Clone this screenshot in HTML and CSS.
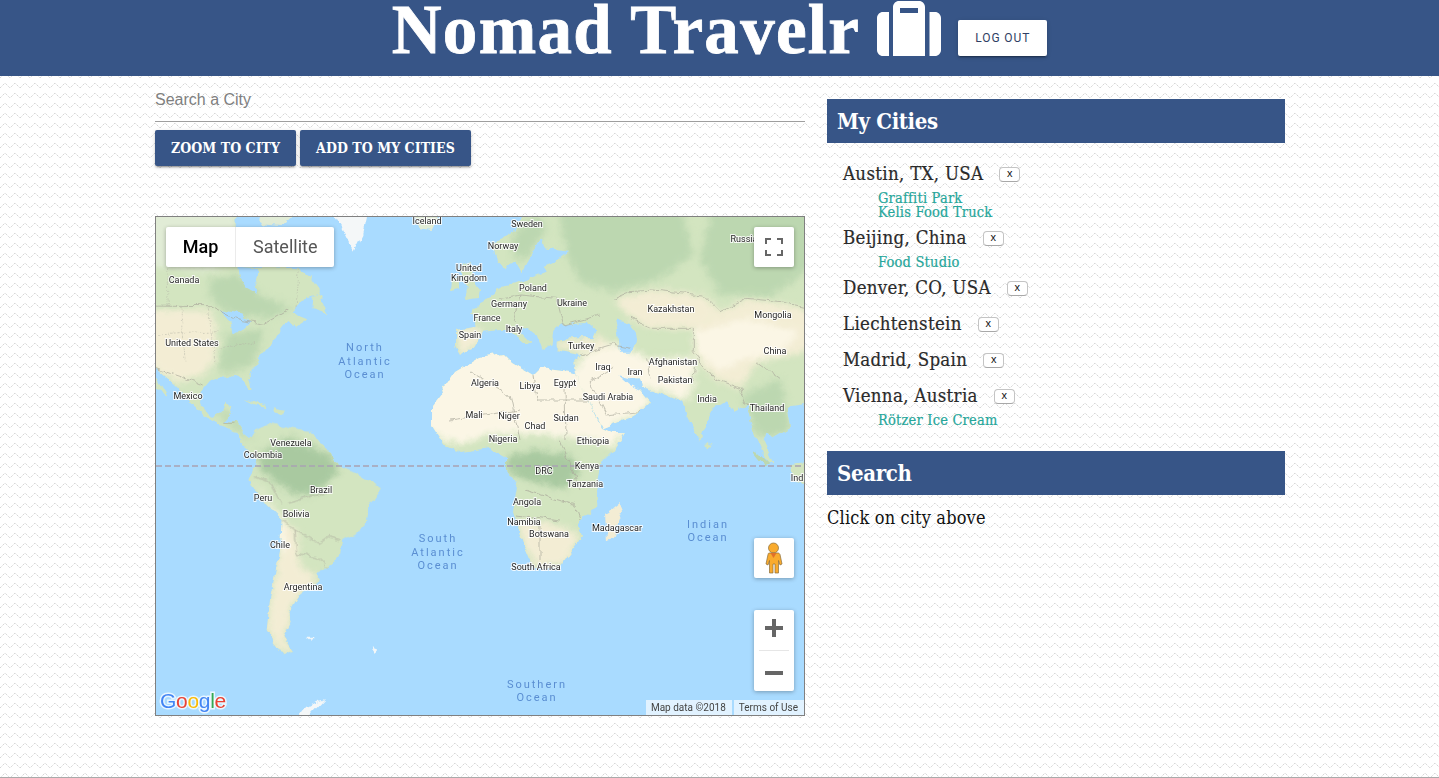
FILE: index.html
```html
<!DOCTYPE html>
<html lang="en">
<head>
<meta charset="utf-8">
<title>Nomad Travelr</title>
<link rel="stylesheet" href="styles.css">
</head>
<body>
<header class="topbar">
  <h1 class="brand">Nomad Travelr</h1>
  <svg class="suitcase" viewBox="0 0 64 55" aria-hidden="true">
    <path d="M12 11v44H6c-3.300 0-6-2.700-6-6V17c0-3.300 2.700-6 6-6zM52.500 11H58c3.300 0 6 2.700 6 6v32c0 3.300-2.700 6-6 6h-5.500z"/>
    <path fill-rule="evenodd" d="M16 55V6c0-3.300 2.700-6 6-6h20c3.300 0 6 2.700 6 6v49zM23 7v5h18V7z"/>
  </svg>
  <button class="logout">Log out</button>
</header>

<main class="page">
  <section class="left">
    <div class="search-field">Search a City</div>
    <div class="actions">
      <button class="action">Zoom to city</button>
      <button class="action">Add to my cities</button>
    </div>
    <div class="map">
      <svg class="map-art" viewBox="156 217 648 498" aria-label="World map">
        <defs>
          <filter id="rough" filterUnits="userSpaceOnUse" x="130" y="190" width="700" height="550">
            <feTurbulence type="fractalNoise" baseFrequency=".1" numOctaves="3" seed="4" result="n"/>
            <feDisplacementMap in="SourceGraphic" in2="n" scale="7" xChannelSelector="R" yChannelSelector="G"/>
          </filter>
          <filter id="soft" filterUnits="userSpaceOnUse" x="130" y="190" width="700" height="550">
            <feGaussianBlur stdDeviation="3.500"/>
          </filter>
          <path id="na" transform="translate(155 215) scale(.33333)" d="M-40 -40L240 -40L245 155L310 155L430 160L470 190L495 225L490 240L440 255L410 290L460 310L420 335L395 320L370 350L350 385L320 420L300 450L280 480L290 525L280 525L265 490L240 480L195 485L165 500L140 530L135 565L165 605L200 590L210 565L232 570L225 600L205 625L245 620L270 655L310 685L270 690L235 645L195 630L150 605L110 565L60 510L10 465L-40 440Z"/>
          <path id="sa" transform="translate(155 440) scale(.33333)" d="M300 -30L350 -50L470 -25L550 75L610 100L678 145L640 200L635 260L565 300L555 340L520 385L480 395L495 420L430 470L400 520L410 545L385 590L415 635L385 645L335 570L345 480L375 330L380 240L330 190L280 120L305 60L270 20Z"/>
          <path id="af" d="M480 357L503 353L513 363L533 375L540 368L577 373L580 385L602 428L613 433L625 433L613 452L600 465L597 483L595 507L577 523L582 537L570 553L560 568L533 567L523 543L513 512L518 487L507 470L507 457L490 448L462 452L445 445L432 425L432 405L442 392L455 372Z"/>
          <path id="eu" transform="translate(480 215) scale(.33333)" d="M215 -40L1030 -40L1030 560L920 575L930 640L880 670L860 650L850 680L880 745L860 740L820 650L800 570L760 590L740 560L690 590L660 680L620 600L610 560L560 540L490 520L480 490L440 490L480 525L510 560L470 600L370 640L300 510L285 440L300 420L230 405L230 380L260 370L340 370L350 345L320 320L240 330L220 350L215 390L190 410L170 360L150 345L100 330L155 385L140 390L80 345L60 345L10 350L-20 400L-50 410L-60 420L-75 395L-75 345L-10 335L-15 300L-30 290L15 260L50 220L110 205L200 170L190 150L240 130L265 110L190 100L180 60Z"/>
          <path id="sc" transform="translate(480 215) scale(.33333)" d="M230 -40L160 -40L100 50L35 90L45 130L80 160L110 140L125 175L150 130L175 80L230 40Z"/>
          <clipPath id="landclip">
            <use href="#na"/><use href="#sa"/><use href="#af"/><use href="#eu"/><use href="#sc"/>
          </clipPath>
        </defs>

        <g filter="url(#rough)">
          <g class="land">
            <use href="#na"/><use href="#sa"/><use href="#af"/><use href="#eu"/><use href="#sc"/>
          </g>

          <g clip-path="url(#landclip)">
            <g filter="url(#soft)">
              <!-- North America regions -->
              <g transform="translate(155 215) scale(.33333)">
                <path class="pale" d="M-40 -40L240 -40L245 130L165 170L-40 150Z"/>
                <path class="beige" d="M-40 285L165 285L185 340L180 440L130 490L60 500L-40 440Z"/>
                <path class="mid" d="M160 190L250 180L320 240L410 280L340 310L230 300L170 255Z"/>
                <path class="mid" d="M215 360L330 340L300 440L240 470L190 470Z"/>
                <path class="mid" d="M145 560L240 610L300 680L240 640Z"/>
              </g>
              <!-- South America regions -->
              <g transform="translate(155 440) scale(.33333)">
                <path class="beige" d="M375 240L425 270L435 380L490 410L430 470L400 520L410 545L385 590L415 635L385 645L335 570L345 480L375 330Z"/>
                <path class="dark" d="M305 50L400 -10L530 50L550 90L500 150L440 170L380 140L325 100Z"/>
                <path class="sand" d="M290 115L330 170L380 240L400 330L370 330L355 230Z"/>
              </g>
              <!-- Africa regions -->
              <path class="sand" d="M480 350L503 348L540 362L585 368L610 425L630 430L613 447L585 440L540 434L490 434L460 445L440 438L425 425L428 400L450 365Z"/>
              <path class="dark" d="M507 457L535 450L570 455L580 472L565 488L530 482L507 470Z"/>
              <path class="beige" d="M518 520L560 525L580 537L565 565L535 565L523 543Z"/>
              <!-- Eurasia regions -->
              <g transform="translate(480 215) scale(.33333)">
                <path class="mid" d="M230 -40L600 -40L640 120L540 190L400 230L300 200L260 120Z"/>
                <path class="mid" d="M700 -40L1030 -40L1030 130L880 240L720 240L660 130Z"/>
                <path class="mid" d="M100 50L175 0L200 40L140 130L100 130Z"/>
                <path class="beige" d="M400 250L520 225L670 240L720 290L640 340L520 340L450 310Z"/>
                <path class="beige" d="M720 290L800 250L1030 290L1030 400L830 440L780 520L700 490L640 410L640 340Z"/>
                <path class="sand" d="M640 350L800 310L960 350L900 420L800 430L720 470L650 410Z"/>
                <path class="sand" d="M300 420L400 390L450 400L500 430L650 430L640 500L620 560L560 530L490 520L510 560L470 600L370 640L300 510Z"/>
                <path class="beige" d="M230 380L370 365L390 395L300 410L230 400Z"/>
                <path class="beige" d="M-75 345L-10 335L10 350L-20 400L-60 420Z"/>
                <path class="mid" d="M790 540L900 490L930 640L880 670L820 650Z"/>
              </g>
            </g>
          </g>

          <!-- Inland water and islands -->
          <g transform="translate(155 215) scale(.33333)">
            <path class="water" d="M250 155L310 160L300 190L305 235L270 215L255 190Z"/>
            <path class="water" d="M195 285L255 295L290 320L270 340L232 360L228 325Z"/>
            <path class="land" d="M475 245L495 240L520 295L490 285L472 280Z"/>
            <path class="land" d="M265 552L335 572L335 580L300 570ZM350 580L390 588L380 597L355 592ZM3 490L35 545L25 540L0 505Z"/>
            <path class="pale" d="M300 -10L430 -10L380 30L320 25Z"/>
            <path class="ice" d="M530 -10L640 -10L625 60L600 110L585 90L560 40Z"/>
            <path class="pale" d="M775 -10L860 -10L830 45L795 40Z"/>
          </g>
          <g transform="translate(155 440) scale(.33333)">
            <path class="ice" d="M455 590L478 590L470 602ZM650 625L668 632L660 640Z"/>
          </g>
          <path class="ice" d="M296 720L305 708L318 701L324 699L312 712L305 720Z"/>
          <g transform="translate(480 215) scale(.33333)">
            <path class="water" d="M240 330L320 322L350 345L340 368L260 365L230 350Z"/>
            <path class="water" d="M405 310L455 325L470 370L455 410L420 410L415 360Z"/>
            <path class="water" d="M415 480L450 490L480 525L450 510Z"/>
            <path class="land" d="M680 680L695 690L690 700L680 695Z"/>
            <path class="mid" d="M830 710L865 745L850 752L820 715Z"/>
            <path class="line" d="M400 250L450 230L520 225L670 240L720 290L800 250L900 260L1030 290M450 310L520 340L640 340M640 340L640 410L700 490L780 520M500 430L510 490M650 430L640 500M300 420L400 390L450 400M400 460L330 500L380 600L480 590M60 250L120 240L230 250M120 240L100 320M230 250L250 330L360 300M830 440L900 490M780 520L800 570"/>
          </g>
          <path class="land" d="M462 265L470 262L472 278L480 290L478 298L464 300L468 288L462 278Z"/>
          <path class="land" d="M452 278L460 276L460 288L451 292Z"/>
          <path class="land" d="M790 465L815 462L815 490L795 480Z"/>
          <path class="beige" d="M605 515L620 503L623 510L613 538L607 540Z"/>

          <g transform="translate(155 215) scale(.33333)">
            <path class="line" d="M-40 270L165 272L240 310L330 325L400 285M0 460L90 490L140 510M205 625L235 625"/>
            <path class="dash" d="M80 275L90 440M160 280L180 440M0 360L190 350M190 400L300 380M430 160L420 280M35 160L40 270"/>
          </g>
          <g transform="translate(155 440) scale(.33333)">
            <path class="line" d="M420 270L490 310L520 290L560 300M380 240L420 270L425 340L485 350L520 385M300 110L350 130L380 190M400 190L530 150"/>
          </g>
          <path class="line-thin" d="M470 372L510 395L520 440M533 375L536 400L590 400M565 385L566 440M450 420L520 410M560 440L580 490M525 490L575 505L580 520M515 515L560 520M540 520L540 560"/>
        </g>

        <path class="equator" d="M156 466H804"/>

        <g class="places">
          <text x="427" y="224">Iceland</text><text x="527" y="227">Sweden</text><text x="503" y="249">Norway</text>
          <text x="469" y="271">United</text><text x="469" y="281">Kingdom</text><text x="533" y="291">Poland</text>
          <text x="509" y="307">Germany</text><text x="487" y="321">France</text><text x="470" y="338">Spain</text>
          <text x="514" y="332">Italy</text><text x="572" y="306">Ukraine</text><text x="671" y="312">Kazakhstan</text>
          <text x="773" y="318">Mongolia</text><text x="581" y="349">Turkey</text><text x="775" y="354">China</text>
          <text x="603" y="370">Iraq</text><text x="635" y="375">Iran</text><text x="673" y="365">Afghanistan</text>
          <text x="675" y="383">Pakistan</text><text x="485" y="386">Algeria</text><text x="530" y="389">Libya</text>
          <text x="565" y="386">Egypt</text><text x="608" y="400">Saudi Arabia</text><text x="707" y="402">India</text>
          <text x="767" y="411">Thailand</text><text x="474" y="418">Mali</text><text x="509" y="419">Niger</text>
          <text x="535" y="429">Chad</text><text x="566" y="421">Sudan</text><text x="503" y="442">Nigeria</text>
          <text x="593" y="444">Ethiopia</text><text x="184" y="283">Canada</text><text x="192" y="346">United States</text>
          <text x="188" y="399">Mexico</text><text x="291" y="446">Venezuela</text><text x="263" y="458">Colombia</text>
          <text x="263" y="501">Peru</text><text x="321" y="493">Brazil</text><text x="296" y="517">Bolivia</text>
          <text x="280" y="548">Chile</text><text x="303" y="590">Argentina</text><text x="544" y="474">DRC</text>
          <text x="587" y="469">Kenya</text><text x="585" y="487">Tanzania</text><text x="527" y="505">Angola</text>
          <text x="524" y="525">Namibia</text><text x="549" y="537">Botswana</text><text x="617" y="531">Madagascar</text>
          <text x="536" y="570">South Africa</text><text x="744" y="242">Russia</text><text x="797" y="481">Ind</text>
        </g>
        <g class="oceans">
          <text x="365" y="351">North</text><text x="365" y="365">Atlantic</text><text x="365" y="378">Ocean</text>
          <text x="438" y="542">South</text><text x="438" y="556">Atlantic</text><text x="438" y="569">Ocean</text>
          <text x="708" y="528">Indian</text><text x="708" y="541">Ocean</text>
          <text x="537" y="688">Southern</text><text x="537" y="701">Ocean</text>
        </g>
        <text class="google" x="160" y="708"><tspan class="g-blue">G</tspan><tspan class="g-red">o</tspan><tspan class="g-yellow">o</tspan><tspan class="g-blue">g</tspan><tspan class="g-green">l</tspan><tspan class="g-red">e</tspan></text>
      </svg>

      <div class="map-type">
        <span class="type-btn type-active">Map</span>
        <span class="type-btn">Satellite</span>
      </div>
      <div class="ctl fullscreen">
        <svg viewBox="0 0 18 18" width="18" height="18"><path class="ctl-icon" d="M0 6V0h6v2H2v4zM12 0h6v6h-2V2h-4zM0 12h2v4h4v2H0zM16 12h2v6h-6v-2h4z"/></svg>
      </div>
      <div class="ctl pegman">
        <svg viewBox="0 0 40 40" width="40" height="40">
          <circle class="peg" cx="19.500" cy="10" r="5"/>
          <path class="peg" d="M15 15h9c1 0 1.500.6 2 1.500L28 26l-2 1-1.500-4.500V35h-3.500v-9h-2v9h-3.500V22.500L14 27l-2-1 2-9.500c.3-.9.500-1.500 1-1.500z"/>
          <path class="peg-v" d="M16.500 15h6L19.500 20z"/>
        </svg>
      </div>
      <div class="ctl zoom">
        <button class="zoom-btn zoom-in"><svg viewBox="0 0 18 18" width="18" height="18"><path class="ctl-icon" d="M7 0h4v7h7v4h-7v7H7v-7H0V7h7z"/></svg></button>
        <i class="zoom-sep"></i>
        <button class="zoom-btn zoom-out"><svg viewBox="0 0 18 18" width="18" height="18"><path class="ctl-icon" d="M0 7h18v4H0z"/></svg></button>
      </div>
      <div class="attribution">
        <span class="attr-item">Map data ©2018</span>
        <span class="attr-item">Terms of Use</span>
      </div>
    </div>
  </section>

  <aside class="right">
    <h2 class="panel-title">My Cities</h2>
    <ul class="cities">
      <li>
        <div class="city"><span>Austin, TX, USA</span><button class="remove">x</button></div>
        <a class="spot">Graffiti Park</a>
        <a class="spot">Kelis Food Truck</a>
      </li>
      <li>
        <div class="city"><span>Beijing, China</span><button class="remove">x</button></div>
        <a class="spot">Food Studio</a>
      </li>
      <li><div class="city"><span>Denver, CO, USA</span><button class="remove">x</button></div></li>
      <li><div class="city"><span>Liechtenstein</span><button class="remove">x</button></div></li>
      <li><div class="city"><span>Madrid, Spain</span><button class="remove">x</button></div></li>
      <li>
        <div class="city"><span>Vienna, Austria</span><button class="remove">x</button></div>
        <a class="spot">Rötzer Ice Cream</a>
      </li>
    </ul>
    <h2 class="panel-title">Search</h2>
    <p class="hint">Click on city above</p>
  </aside>
</main>
<footer class="bottom-rule"></footer>
</body>
</html>
```

FILE: styles.css
```css
* { box-sizing: border-box; }

html, body { margin: 0; height: 100%; overflow: hidden; }

body {
  display: flex;
  flex-direction: column;
  height: 778px;
  background-color: #fff;
  background-image: url("data:image/svg+xml,%3Csvg xmlns='http://www.w3.org/2000/svg' width='20' height='10'%3E%3Cpath d='M0 8L5 3L10 8L15 3L20 8' fill='none' stroke='%23cfcfcf' stroke-width='1' stroke-dasharray='1.200 1'/%3E%3C/svg%3E");
  font-family: "DejaVu Serif Condensed", "DejaVu Serif", serif;
  color: #222;
}

/* Header */
.topbar {
  flex: none;
  height: 76px;
  background: #375587;
  display: flex;
  justify-content: center;
  align-items: flex-start;
}

.brand {
  margin: 0;
  font-family: "Liberation Serif", serif;
  font-weight: 700;
  font-size: 69px;
  line-height: 60px;
  letter-spacing: 1.300px;
  color: #fff;
  -webkit-text-stroke: .8px #fff;
  white-space: nowrap;
}

.suitcase {
  width: 64px;
  height: 55px;
  margin: 1px 0 0 17px;
  fill: #fff;
}

.logout {
  width: 89px;
  height: 36px;
  margin: 20px 0 0 17px;
  border: 0;
  border-radius: 2px;
  background: #fff;
  box-shadow: 0 2px 2px rgba(0,0,0,.14), 0 3px 1px -2px rgba(0,0,0,.2), 0 1px 5px rgba(0,0,0,.12);
  font-family: Roboto, sans-serif;
  font-size: 12px;
  letter-spacing: .9px;
  text-transform: uppercase;
  color: #2f3e64;
}

/* Page columns */
.page {
  flex: 1;
  display: flex;
  gap: 22px;
  margin-left: 155px;
  width: 1130px;
}

.left { width: 650px; display: flex; flex-direction: column; }
.right { width: 458px; padding-top: 23px; }

.search-field {
  height: 46px;
  padding-top: 14px;
  border-bottom: 1px solid #9e9e9e;
  font-family: "Liberation Sans", sans-serif;
  font-size: 16px;
  line-height: 19px;
  color: #7f7f7f;
}

.actions { display: flex; gap: 4px; margin-top: 8px; }

.action {
  height: 36px;
  padding: 0 16px;
  border: 0;
  border-radius: 2px;
  background: #375587;
  box-shadow: 0 2px 2px rgba(0,0,0,.14), 0 3px 1px -2px rgba(0,0,0,.2), 0 1px 5px rgba(0,0,0,.12);
  font-family: inherit;
  font-weight: 700;
  font-size: 14px;
  letter-spacing: .05px;
  text-transform: uppercase;
  color: #fff;
}

/* Map */
.map {
  position: relative;
  width: 650px;
  height: 500px;
  margin-top: 50px;
  border: 1px solid #808080;
  background: #a9dbff;
  overflow: hidden;
  font-family: Roboto, sans-serif;
}

.map-art { display: block; width: 648px; height: 498px; }

.land  { fill: #d3e5c0; }
.pale  { fill: #e1ecd6; }
.mid   { fill: #bcd7b0; }
.dark  { fill: #a9c9a0; }
.beige { fill: #f3edd4; }
.sand  { fill: #fbf6e5; }
.water { fill: #a9dbff; }
.ice   { fill: #f4f7f8; }
.line  { fill: none; stroke: #aaa99b; stroke-width: 2; }
.line-thin { fill: none; stroke: #aaa99b; stroke-width: .7; }
.dash  { fill: none; stroke: #b5b5a5; stroke-width: 1.500; stroke-dasharray: 5 4; }
.equator { fill: none; stroke: #a9a3b3; stroke-width: 1.500; stroke-dasharray: 6 3; }

.places text {
  font-family: Roboto, sans-serif;
  font-size: 9px;
  font-weight: 400;
  text-anchor: middle;
  fill: #1f1f1f;
  stroke: #fff;
  stroke-width: 2px;
  stroke-opacity: .85;
  paint-order: stroke;
}

.oceans text {
  font-family: Roboto, sans-serif;
  font-size: 11px;
  letter-spacing: 2px;
  text-anchor: middle;
  fill: #5a8ed2;
}

.google {
  font-family: "Liberation Sans", sans-serif;
  font-size: 21px;
  letter-spacing: -.3px;
  stroke: #fff;
  stroke-width: 3px;
  stroke-opacity: .75;
  paint-order: stroke;
}
.g-blue { fill: #4285f4; }
.g-red { fill: #ea4335; }
.g-yellow { fill: #fbbc05; }
.g-green { fill: #34a853; }

.map-type {
  position: absolute;
  top: 10px;
  left: 10px;
  display: flex;
  height: 40px;
  border-radius: 2px;
  background: #fff;
  box-shadow: 0 1px 4px rgba(0,0,0,.3);
  font-size: 18px;
  line-height: 40px;
}

.type-btn { padding: 0 17px; color: #565656; }
.type-active {
  width: 70px;
  padding: 0;
  text-align: center;
  font-weight: 500;
  color: #000;
  border-right: 1px solid #ebebeb;
}

.ctl {
  position: absolute;
  right: 10px;
  width: 40px;
  border-radius: 2px;
  background: #fff;
  box-shadow: 0 1px 4px rgba(0,0,0,.3);
}

.fullscreen { top: 10px; height: 40px; display: flex; align-items: center; justify-content: center; }
.pegman { top: 321px; height: 40px; }
.zoom { top: 393px; height: 81px; }

.ctl-icon { fill: #666; }
.peg { fill: #f9ab2e; stroke: #8a6d3b; stroke-width: .7; }
.peg-v { fill: #e0702a; }

.zoom-btn {
  display: flex;
  align-items: center;
  justify-content: center;
  width: 40px;
  height: 40px;
  padding: 0;
  border: 0;
  background: none;
}
.zoom-in { padding-bottom: 4px; }
.zoom-out { padding-top: 4px; }

.zoom-sep { display: block; height: 1px; margin: 0 5px; background: #e6e6e6; }

.attribution {
  position: absolute;
  right: 0;
  bottom: 0;
  display: flex;
  gap: 2px;
  font-size: 10px;
  line-height: 15px;
  color: #444;
}

.attr-item { padding: 0 6px 0 5px; background: rgba(255,255,255,.65); }

/* Right column */
.panel-title {
  margin: 0;
  height: 44px;
  padding-left: 10px;
  background: #375587;
  font-weight: 700;
  font-size: 22px;
  letter-spacing: -.35px;
  line-height: 44px;
  color: #fff;
}

.cities {
  margin: 0 0 24px;
  padding: 12px 0 0 16px;
  list-style: none;
}

.city {
  display: flex;
  align-items: center;
  height: 36px;
  font-size: 18.500px;
  letter-spacing: .32px;
  color: #2a2a2a;
  -webkit-text-stroke: .2px #2a2a2a;
}

.remove {
  width: 21px;
  height: 15px;
  margin: 2px 0 0 16px;
  padding: 0 0 2px;
  border: 1px solid #c4c4c4;
  border-bottom-color: #a8a8a8;
  border-radius: 4px;
  background: #fff;
  font-family: "Liberation Sans", sans-serif;
  font-size: 11px;
  line-height: 11px;
  letter-spacing: 0;
  -webkit-text-stroke: 0;
  color: #111;
}

.spot {
  display: block;
  margin-left: 35px;
  font-size: 14.500px;
  letter-spacing: .2px;
  line-height: 14px;
  color: #26a69a;
  -webkit-text-stroke: .2px #26a69a;
}

.hint {
  margin: 11px 0 0;
  font-size: 18px;
  letter-spacing: .16px;
  line-height: 24px;
  color: #111;
}

.bottom-rule {
  flex: none;
  height: 1px;
  background: #aaa;
}
```
